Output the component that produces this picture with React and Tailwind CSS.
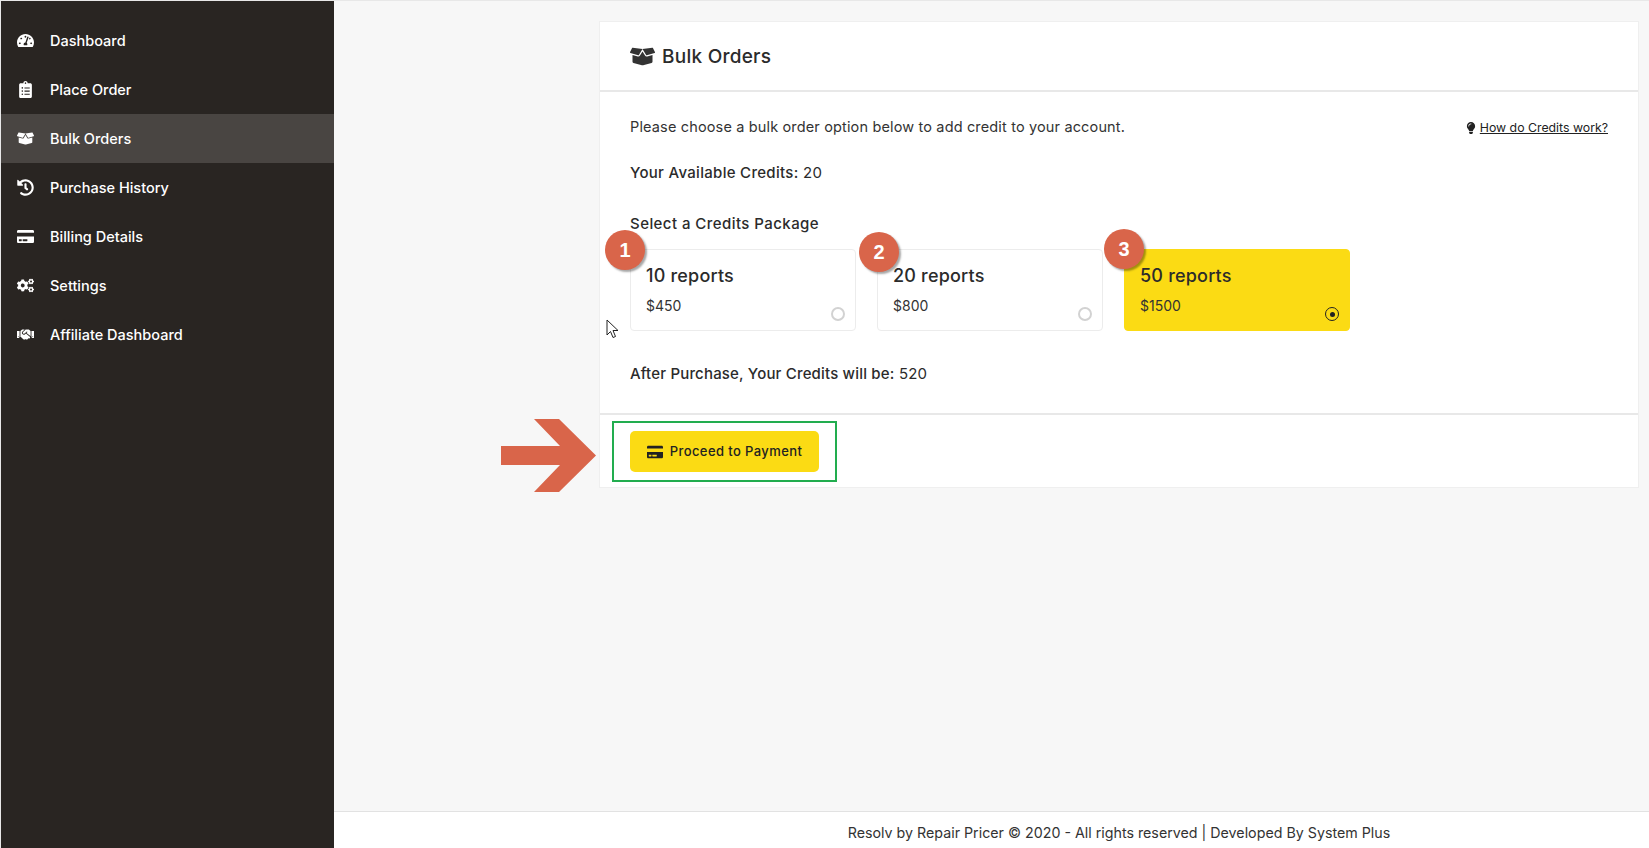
import {
	FaTachometerAlt,
	FaClipboardList,
	FaBoxOpen,
	FaHistory,
	FaCreditCard,
	FaCogs,
	FaHandshake,
	FaLightbulb,
} from "react-icons/fa";

const menu = [
	{ label: "Dashboard", icon: FaTachometerAlt },
	{ label: "Place Order", icon: FaClipboardList },
	{ label: "Bulk Orders", icon: FaBoxOpen, active: true },
	{ label: "Purchase History", icon: FaHistory },
	{ label: "Billing Details", icon: FaCreditCard },
	{ label: "Settings", icon: FaCogs },
	{ label: "Affiliate Dashboard", icon: FaHandshake },
];

const packages = [
	{ name: "10 reports", price: "$450", no: 1, badge: "left-[-26px] top-[-20px]" },
	{ name: "20 reports", price: "$800", no: 2, badge: "left-[-19px] top-[-18px]" },
	{
		name: "50 reports",
		price: "$1500",
		no: 3,
		badge: "left-[-21px] top-[-21px]",
		selected: true,
	},
];

function PackageCard({ item }) {
	return (
		<div
			className={`relative h-[82px] w-[226px] rounded border px-[15px] ${
				item.selected
					? "border-[#fbdb14] bg-[#fbdb14]"
					: "border-[#ececec] bg-white"
			}`}
		>
			<span
				className={`absolute ${item.badge} flex h-10 w-10 items-center justify-center rounded-full bg-[#d9654a] text-[20px] font-bold text-white shadow-[2px_2px_2px_rgba(0,0,0,0.35)] font-['Liberation_Sans',sans-serif]`}
			>
				{item.no}
			</span>
			<p className="mt-[13px] text-[18px] font-medium leading-[26px] tracking-[0.2px] text-[#2b2b2b]">
				{item.name}
			</p>
			<p className="mt-[7px] text-[14px] leading-[20px] text-[#333]">
				{item.price}
			</p>
			{item.selected ? (
				<span className="absolute bottom-[9px] right-[10px] flex h-[14px] w-[14px] items-center justify-center rounded-full border-[1.5px] border-[#222]">
					<span className="h-[5px] w-[5px] rounded-full bg-[#222]" />
				</span>
			) : (
				<span className="absolute bottom-[9px] right-[10px] h-[14px] w-[14px] rounded-full border-2 border-[#d2d2d2]" />
			)}
		</div>
	);
}

export default function App() {
	return (
		<div className="relative flex h-screen overflow-hidden border-l border-t border-[#e8e8e8] bg-[#f7f7f7] font-['Inter',sans-serif] text-[#2b2b2b]">
			<aside className="h-full w-[333px] shrink-0 bg-[#292522] pt-[15px]">
				{menu.map((item) => {
					const Icon = item.icon;
					return (
						<a
							key={item.label}
							className={`flex h-[49px] items-center text-[14.5px] font-medium text-white ${
								item.active ? "bg-[#494542]" : ""
							}`}
						>
							<span className="flex w-[49px] justify-center">
								<Icon className="text-[17px]" />
							</span>
							{item.label}
						</a>
					);
				})}
			</aside>

			<div className="flex min-w-0 flex-1 flex-col">
				<main className="flex-1 pl-[265px] pr-[10px] pt-[20px]">
					<section className="border border-[#efefef] bg-white">
						<header className="flex h-[70px] items-center gap-[7px] border-b-2 border-[#e8e8e8] px-[30px]">
							<FaBoxOpen className="text-[25px] text-[#333]" />
							<h1 className="pt-[2px] text-[19px] font-medium tracking-[0.25px] text-[#2b2b2b]">
								Bulk Orders
							</h1>
						</header>

						<div className="px-[30px] pb-[27px] pt-[23px]">
							<div className="flex h-[24px] items-center justify-between">
								<p className="text-[14.5px] leading-[24px] tracking-[0.15px] text-[#333]">
									Please choose a bulk order option below to add credit to your
									account.
								</p>
								<a className="mt-[2px] flex items-center gap-[3px] text-[12.3px] text-[#222] underline">
									<FaLightbulb className="text-[12px]" />
									How do Credits work?
								</a>
							</div>
							<p className="mt-[22px] text-[15px] leading-[24px] tracking-[0.3px]">
								<span className="font-medium">Your Available Credits:</span> 20
							</p>
							<p className="mt-[27px] text-[15px] font-medium leading-[24px] tracking-[0.44px]">
								Select a Credits Package
							</p>
							<div className="mt-[13px] flex gap-[21px]">
								{packages.map((item) => (
									<PackageCard key={item.no} item={item} />
								))}
							</div>
							<p className="mt-[31px] text-[15px] leading-[24px] tracking-[0.18px]">
								<span className="font-medium">
									After Purchase, Your Credits will be:
								</span>{" "}
								520
							</p>
						</div>

						<div className="relative border-t-2 border-[#e8e8e8] px-[30px] pb-[15px] pt-[16px]">
							<button className="flex h-[41px] w-[189px] items-center justify-center gap-[7px] rounded-[5px] bg-[#fbdb14] text-[13px] font-medium tracking-[0.4px] text-[#222]">
								<FaCreditCard className="text-[16px]" />
								Proceed to Payment
							</button>
							{/* 스크린샷 위 주석 표시 */}
							<span className="absolute left-[12px] top-[6px] h-[61px] w-[225px] border-2 border-[#22ad4f]" />
							<svg
								className="absolute left-[-99px] top-[4px]"
								width="95"
								height="73"
								viewBox="0 0 95 73"
							>
								<path
									d="M0 27H59L33 0H58L95 36.5L58 73H33L59 46H0Z"
									fill="#d9654a"
								/>
							</svg>
						</div>
					</section>
				</main>

				<footer className="h-[37px] border-t border-[#e2e2e2] bg-white pl-[265px] pr-[10px] text-center text-[14.25px] leading-[42px] text-[#333]">
					Resolv by Repair Pricer © 2020 - All rights reserved | Developed By
					System Plus
				</footer>
			</div>

			{/* 마우스 커서 */}
			<svg
				className="absolute left-[605px] top-[318px]"
				width="14"
				height="20"
				viewBox="0 0 14 20"
			>
				<path
					d="M1 1V16L4.5 12.5L7 18.5L9.5 17.5L7 11.5H12Z"
					fill="white"
					stroke="#222"
					strokeWidth="1"
				/>
			</svg>
		</div>
	);
}
